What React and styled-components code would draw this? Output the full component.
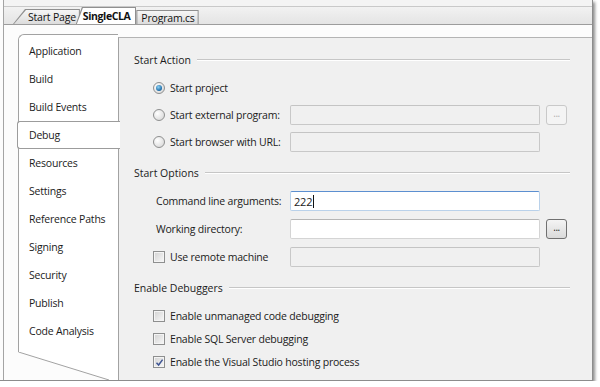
import React from "react";
import styled, { createGlobalStyle } from "styled-components";

const GlobalStyle = createGlobalStyle`
  html, body {
    margin: 0;
    padding: 0;
    background: #ffffff;
  }
  body {
    font-family: "Open Sans", "Noto Sans", "DejaVu Sans", sans-serif;
    font-size: 10.5px;
    letter-spacing: -0.2px;
    color: #1b1b1b;
  }
  * {
    box-sizing: border-box;
  }
`;

const Window = styled.div`
  width: 593px;
  height: 381px;
  padding-left: 3px;
  display: flex;
  border-right: 1px solid #8c8c8c;
  border-bottom: 1px solid #8c8c8c;
  box-shadow: 2px 2px 3px rgba(0, 0, 0, 0.45);
  background: #fcfcfc;
`;

const Frame = styled.div`
  flex: 1;
  display: flex;
  flex-direction: column;
  border-left: 1px solid #a4a4a4;
`;

const Toolbar = styled.div`
  height: 7px;
  background: #f4f4f4;
  border-bottom: 1px solid #c9c9c9;
`;

const TabStrip = styled.div`
  height: 18px;
  display: flex;
  align-items: flex-end;
  padding-left: 9px;
  background: linear-gradient(#f2f2f2, #e4e4e4);
  border-bottom: 1px solid #9c9c9c;
`;

const TabShell = styled.div`
  position: relative;
  z-index: ${p => (p.$active ? 2 : 1)};
  height: ${p => p.$h}px;
  margin-left: ${p => p.$ml}px;
  padding: 1px 1px 0 1px;
  background: #8f8f8f;
  clip-path: polygon(${p => p.$slant}px 0, 100% 0, 100% 100%, 0 100%);
`;

const TabFace = styled.div`
  height: 100%;
  display: flex;
  align-items: center;
  padding-left: ${p => p.$pl}px;
  padding-right: ${p => (p.$active ? 5 : 3)}px;
  font-size: 10.5px;
  letter-spacing: ${p => (p.$active ? "-0.4px" : "-0.2px")};
  font-weight: ${p => (p.$active ? 700 : 400)};
  color: #111;
  background: ${p => (p.$active ? "#ffffff" : "linear-gradient(#f6f6f6, #dcdcdc)")};
  clip-path: polygon(${p => p.$slant}px 0, 100% 0, 100% 100%, 0 100%);
`;

const Body = styled.div`
  flex: 1;
  display: flex;
  padding: 9px 0 0 14px;
`;

const Nav = styled.div`
  width: 100px;
  display: flex;
  flex-direction: column;
`;

const NavList = styled.div`
  flex: 1;
  padding-top: 2px;
  background: #ffffff;
  border-left: 1px solid #a2a2a2;
  border-top: 1px solid #a2a2a2;
  border-top-left-radius: 6px;
`;

const NavItem = styled.div`
  position: relative;
  z-index: ${p => (p.$active ? 2 : 0)};
  height: 28px;
  display: flex;
  align-items: center;
  padding-left: ${p => (p.$active ? 11 : 10)}px;
  margin-left: ${p => (p.$active ? -2 : 0)}px;
  margin-right: ${p => (p.$active ? -2 : 0)}px;
  background: #ffffff;
  border: ${p => (p.$active ? "1px solid #9c9c9c" : "none")};
  border-right: none;
  border-radius: 3px 0 0 3px;
`;

const NavFoot = styled.svg`
  display: block;
  width: 100px;
  height: 28px;
`;

const Content = styled.div`
  flex: 1;
  margin-top: 3px;
  padding: 12px 22px 0 15px;
  display: flex;
  flex-direction: column;
  gap: 10px;
  background: #f0f0f0;
  border-left: 1px solid #a2a2a2;
  border-top: 1px solid #b4b4b4;
`;

const Section = styled.div`
  display: flex;
  flex-direction: column;
`;

const SectionHeader = styled.div`
  height: 20px;
  display: flex;
  align-items: center;
  gap: 6px;
  letter-spacing: 0;
`;

const Rule = styled.div`
  flex: 1;
  height: 2px;
  border-top: 1px solid #c6c6c6;
  border-bottom: 1px solid #ffffff;
`;

const Rows = styled.div`
  display: flex;
  flex-direction: column;
  gap: ${p => p.$gap}px;
  padding-top: ${p => p.$top}px;
`;

const Row = styled.div`
  height: 22px;
  display: flex;
  align-items: center;
  padding-left: 19px;
`;

const LabelCell = styled.label`
  width: 137px;
  display: flex;
  align-items: center;
  gap: 5px;
  padding-left: ${p => p.$indent || 0}px;
  white-space: nowrap;
`;

const Radio = styled.span`
  width: 12px;
  height: 12px;
  flex: none;
  display: flex;
  align-items: center;
  justify-content: center;
  border-radius: 50%;
  border: 1px solid #8e8f8f;
  background: radial-gradient(circle at 35% 35%, #ffffff, #d2d2d2);
  &::after {
    content: "";
    display: ${p => (p.$checked ? "block" : "none")};
    width: 6px;
    height: 6px;
    border-radius: 50%;
    background: radial-gradient(circle at 40% 35%, #8fd3f5, #1a6aa6 70%, #0e3f6b);
  }
`;

const Box = styled.span`
  width: 12px;
  height: 12px;
  flex: none;
  display: flex;
  align-items: center;
  justify-content: center;
  border: 1px solid #8e8f8f;
  background: linear-gradient(135deg, #d2d2d2, #f8f8f8);
  box-shadow: inset 0 0 0 1px #f4f4f4;
`;

const Field = styled.div`
  width: 250px;
  height: 20px;
  display: flex;
  align-items: center;
  padding-left: 3px;
  border-radius: 2px;
  background: ${p => (p.$enabled ? "#ffffff" : "#f0f0f0")};
  border: 1px solid ${p => (p.$focus ? "#b9d1ea" : p.$enabled ? "#d4d4d4" : "#c8c8c8")};
  border-top-color: ${p => (p.$focus ? "#5c8fd0" : p.$enabled ? "#b5b5b5" : "#c4c4c4")};
  font-size: 11px;
`;

const Caret = styled.span`
  width: 1px;
  height: 13px;
  background: #111;
  margin-left: 1px;
`;

const Browse = styled.div`
  width: 21px;
  height: 20px;
  margin-left: 6px;
  display: flex;
  align-items: center;
  justify-content: center;
  padding-bottom: 4px;
  border-radius: 3px;
  font-size: 10px;
  letter-spacing: -0.5px;
  color: ${p => (p.$enabled ? "#222" : "#b0b0b0")};
  border: 1px solid ${p => (p.$enabled ? "#707070" : "#c9c9c9")};
  background: ${p => (p.$enabled ? "linear-gradient(#f4f4f4, #dadada)" : "#f4f4f4")};
`;

const navItems = [
  "Application",
  "Build",
  "Build Events",
  "Debug",
  "Resources",
  "Settings",
  "Reference Paths",
  "Signing",
  "Security",
  "Publish",
  "Code Analysis",
];

const Check = ({ checked }) => (
  <Box>
    {checked && (
      <svg width="9" height="9" viewBox="0 0 9 9">
        <path d="M1.5 4.8 L3.6 7 L7.6 1.6" fill="none" stroke="#3f5593" strokeWidth="1.5" />
      </svg>
    )}
  </Box>
);

const Header = ({ title }) => (
  <SectionHeader>
    <span>{title}</span>
    <Rule />
  </SectionHeader>
);

export default function App() {
  return (
    <>
      <GlobalStyle />
      <Window>
        <Frame>
          <Toolbar />
          <TabStrip>
            <TabShell $h={15} $ml={0} $slant={12}>
              <TabFace $pl={14} $slant={12}>Start Page</TabFace>
            </TabShell>
            <TabShell $h={17} $ml={-4} $slant={6} $active>
              <TabFace $pl={6} $slant={6} $active>SingleCLA</TabFace>
            </TabShell>
            <TabShell $h={14} $ml={0} $slant={0}>
              <TabFace $pl={4} $slant={0}>Program.cs</TabFace>
            </TabShell>
          </TabStrip>
          <Body>
            <Nav>
              <NavList>
                {navItems.map(item => (
                  <NavItem key={item} $active={item === "Debug"}>
                    {item}
                  </NavItem>
                ))}
              </NavList>
              <NavFoot viewBox="0 0 100 28">
                <polygon points="0,0 100,0 100,28 91,28" fill="#ffffff" />
                <line x1="0.5" y1="0" x2="91" y2="28" stroke="#a2a2a2" strokeWidth="1" />
              </NavFoot>
            </Nav>
            <Content>
              <Section>
                <Header title="Start Action" />
                <Rows $gap={5} $top={7}>
                  <Row>
                    <LabelCell>
                      <Radio $checked />
                      Start project
                    </LabelCell>
                  </Row>
                  <Row>
                    <LabelCell>
                      <Radio />
                      Start external program:
                    </LabelCell>
                    <Field />
                    <Browse>...</Browse>
                  </Row>
                  <Row>
                    <LabelCell>
                      <Radio />
                      Start browser with URL:
                    </LabelCell>
                    <Field />
                  </Row>
                </Rows>
              </Section>
              <Section>
                <Header title="Start Options" />
                <Rows $gap={6} $top={7}>
                  <Row>
                    <LabelCell $indent={3}>Command line arguments:</LabelCell>
                    <Field $enabled $focus>
                      222
                      <Caret />
                    </Field>
                  </Row>
                  <Row>
                    <LabelCell $indent={3}>Working directory:</LabelCell>
                    <Field $enabled />
                    <Browse $enabled>...</Browse>
                  </Row>
                  <Row>
                    <LabelCell>
                      <Check />
                      Use remote machine
                    </LabelCell>
                    <Field />
                  </Row>
                </Rows>
              </Section>
              <Section>
                <Header title="Enable Debuggers" />
                <Rows $gap={1} $top={7}>
                  <Row>
                    <LabelCell>
                      <Check />
                      Enable unmanaged code debugging
                    </LabelCell>
                  </Row>
                  <Row>
                    <LabelCell>
                      <Check />
                      Enable SQL Server debugging
                    </LabelCell>
                  </Row>
                  <Row>
                    <LabelCell>
                      <Check checked />
                      Enable the Visual Studio hosting process
                    </LabelCell>
                  </Row>
                </Rows>
              </Section>
            </Content>
          </Body>
        </Frame>
      </Window>
    </>
  );
}
